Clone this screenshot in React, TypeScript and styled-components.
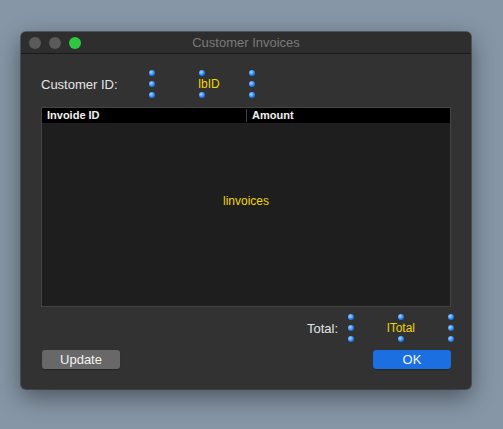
import React from "react";
import styled, { createGlobalStyle } from "styled-components";

const Global = createGlobalStyle`
  body { margin: 0; background: #8696a6; font-family: "Helvetica Neue", "Liberation Sans", Arial, sans-serif; }
`;

const Page = styled.div`
  width: 503px;
  height: 429px;
  padding: 32px 0 0 21px;
  box-sizing: border-box;
`;

const Window = styled.div`
  width: 450px;
  height: 357px;
  background: #323232;
  border-radius: 5px;
  box-shadow: 0 8px 24px rgba(0,0,0,0.45), 0 0 0 1px rgba(0,0,0,0.35);
  overflow: hidden;
  display: flex;
  flex-direction: column;
`;

const TitleBar = styled.div`
  height: 21px;
  border-bottom: 1px solid #1a1a1a;
  background: #2e2e2e;
  display: flex;
  align-items: center;
  position: relative;
  padding-left: 8px;
  gap: 8px;
`;

const Light = styled.span<{ $c: string }>`
  width: 12px;
  height: 12px;
  border-radius: 50%;
  background: ${(p) => p.$c};
`;

const Title = styled.div`
  position: absolute;
  left: 0;
  right: 0;
  text-align: center;
  color: #7a7a7a;
  font-size: 13px;
`;

const Body = styled.div`
  padding: 0 20px 0 20px;
  display: flex;
  flex-direction: column;
`;

const Row = styled.div<{ $top: number; $end?: boolean }>`
  display: flex;
  align-items: center;
  height: 22px;
  margin-top: ${(p) => p.$top}px;
  justify-content: ${(p) => (p.$end ? "flex-end" : "flex-start")};
`;

const Label = styled.div<{ $w: number }>`
  color: #e6e6e6;
  font-size: 13px;
  width: ${(p) => p.$w}px;
`;

const Field = styled.div<{ $shift?: number }>`
  position: relative;
  width: 100px;
  height: 22px;
  display: flex;
  align-items: center;
  justify-content: center;
  padding-left: ${(p) => p.$shift ?? 0}px;
  box-sizing: border-box;
  color: #f2d600;
  font-size: 12px;
`;

const Dot = styled.span`
  position: absolute;
  width: 6px;
  height: 6px;
  border-radius: 50%;
  background: radial-gradient(circle at 35% 35%, #a8d6ff, #1f7ef5 60%, #0b4fbf);
  transform: translate(-50%, -50%);
`;

const Handles = () => {
  const pts = [
    [0, 0], [50, 0], [100, 0],
    [0, 50], [100, 50],
    [0, 100], [50, 100], [100, 100],
  ];
  return (
    <>
      {pts.map(([x, y], i) => (
        <Dot key={i} style={{ left: `${x}%`, top: `${y}%` }} />
      ))}
    </>
  );
};

const Table = styled.div`
  margin-top: 12px;
  height: 198px;
  background: #1e1e1e;
  border: 1px solid #444;
  display: flex;
  flex-direction: column;
`;

const Header = styled.div`
  display: grid;
  grid-template-columns: 204px 1fr;
  background: #000;
  height: 15px;
  color: #f0f0f0;
  font-size: 11px;
  font-weight: bold;
  align-items: center;
`;

const HeadCell = styled.div<{ $sep?: boolean }>`
  padding-left: 5px;
  border-left: ${(p) => (p.$sep ? "1px solid #444" : "none")};
  line-height: 13px;
`;

const TableBody = styled.div`
  flex: 1;
  display: flex;
  align-items: center;
  justify-content: center;
  color: #f2d600;
  font-size: 12px;
  padding-bottom: 28px;
`;

const Buttons = styled.div`
  display: flex;
  justify-content: space-between;
  margin-top: 11px;
  padding-left: 1px;
`;

const Button = styled.button<{ $primary?: boolean }>`
  width: 78px;
  height: 19px;
  border: none;
  border-radius: 3px;
  font-family: inherit;
  font-size: 13px;
  color: #f2f2f2;
  background: ${(p) => (p.$primary ? "#1b6fe0" : "#686868")};
  box-shadow: 0 1px 1px rgba(0,0,0,0.3);
  padding: 0;
`;

export default function App() {
  return (
    <Page>
      <Global />
      <Window>
        <TitleBar>
          <Light $c="#5a5a5a" />
          <Light $c="#5a5a5a" />
          <Light $c="#2fc640" />
          <Title>Customer Invoices</Title>
        </TitleBar>
        <Body>
          <Row $top={19}>
            <Label $w={111}>Customer ID:</Label>
            <Field $shift={14}>lbID<Handles /></Field>
          </Row>
          <Table>
            <Header>
              <HeadCell>Invoide ID</HeadCell>
              <HeadCell $sep>Amount</HeadCell>
            </Header>
            <TableBody>linvoices</TableBody>
          </Table>
          <Row $top={10} $end>
            <Label $w={44}>Total:</Label>
            <Field>lTotal<Handles /></Field>
          </Row>
          <Buttons>
            <Button>Update</Button>
            <Button $primary>OK</Button>
          </Buttons>
        </Body>
      </Window>
    </Page>
  );
}
